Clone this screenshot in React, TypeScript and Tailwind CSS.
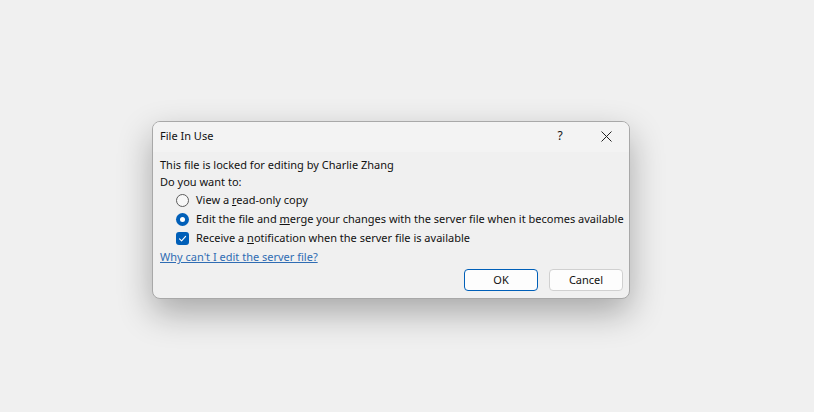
import React from 'react';

function Radio({ checked }: { checked?: boolean }) {
  if (checked) {
    return (
      <span className="w-[13px] h-[13px] rounded-full bg-[#005fb8] flex items-center justify-center shrink-0">
        <span className="w-[5px] h-[5px] rounded-full bg-white" />
      </span>
    );
  }
  return <span className="w-[13px] h-[13px] rounded-full border border-[#5c5c5c] bg-[#f7f7f7] shrink-0" />;
}

function Checkbox() {
  return (
    <span className="w-[13px] h-[13px] rounded-[3px] bg-[#005fb8] flex items-center justify-center shrink-0">
      <svg width="9" height="9" viewBox="0 0 9 9" fill="none">
        <path d="M1.5 4.8 L3.6 6.8 L7.6 2.4" stroke="white" strokeWidth="1.1" strokeLinecap="round" strokeLinejoin="round" />
      </svg>
    </span>
  );
}

export default function App() {
  return (
    <div
      className="min-h-screen w-full bg-[#f0f0f0] pt-[121px] pl-[152px] text-[11px] text-[#111] whitespace-nowrap"
      style={{ fontFamily: '"Noto Sans", "Open Sans", sans-serif' }}
    >
      <div className="w-[478px] rounded-[8px] border border-[#a8a8a8] bg-[#f0f0f0] shadow-[0_14px_34px_rgba(0,0,0,0.3)] overflow-hidden">
        {/* title bar */}
        <div className="h-[30px] bg-[#f3f3f3] flex items-center pl-[7px] pb-[2px]">
          <span className="flex-1">File In Use</span>
          <span className="w-[46px] flex justify-center text-[12px]">?</span>
          <span className="w-[46px] flex justify-center">
            <svg width="11" height="11" viewBox="0 0 11 11">
              <path d="M0.5 0.5 L10.5 10.5 M10.5 0.5 L0.5 10.5" stroke="#222" strokeWidth="1" />
            </svg>
          </span>
        </div>

        {/* body */}
        <div className="pt-[5px] pl-[7px] pr-[6px] pb-[7px]">
          <div className="h-[17px] flex items-center">This file is locked for editing by Charlie Zhang</div>
          <div className="h-[17px] flex items-center pb-[1px]">Do you want to:</div>

          <div className="pl-[16px]">
            <div className="h-[19px] flex items-center gap-[7px]">
              <Radio />
              <span>View a <u>r</u>ead-only copy</span>
            </div>
            <div className="h-[19px] flex items-center gap-[7px]">
              <Radio checked />
              <span>Edit the file and <u>m</u>erge your changes with the server file when it becomes available</span>
            </div>
            <div className="h-[19px] flex items-center gap-[7px]">
              <Checkbox />
              <span>Receive a <u>n</u>otification when the server file is available</span>
            </div>
          </div>

          <div className="h-[19px] flex items-center">
            <a href="#" className="text-[#2f6cb3] underline">Why can't I edit the server file?</a>
          </div>

          <div className="mt-[2px] flex justify-end gap-[11px]">
            <button className="w-[74px] h-[22px] rounded-[4px] border border-[#005fb8] bg-[#fdfdfd] flex items-center justify-center">
              OK
            </button>
            <button className="w-[74px] h-[22px] rounded-[4px] border border-[#d0d0d0] bg-[#fdfdfd] flex items-center justify-center">
              Cancel
            </button>
          </div>
        </div>
      </div>
    </div>
  );
}
